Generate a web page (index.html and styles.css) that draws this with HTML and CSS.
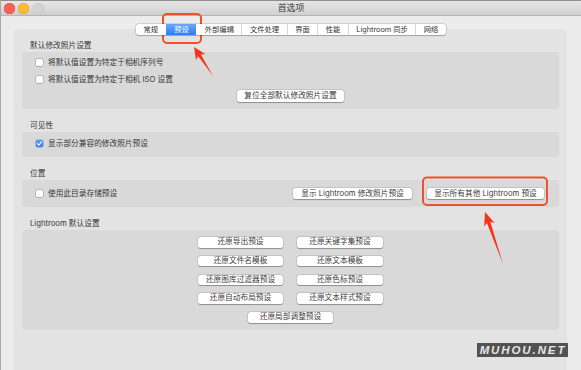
FILE: index.html
```html
<!DOCTYPE html>
<html lang="zh-CN">
<head>
<meta charset="utf-8">
<title>首选项</title>
<link rel="stylesheet" href="styles.css">
</head>
<body>
<div class="window">
  <div class="titlebar">
    <div class="lights">
      <span class="light light-red"></span>
      <span class="light light-yellow"></span>
      <span class="light light-gray"></span>
    </div>
    <div class="title">首选项</div>
    <div></div>
  </div>
  <div class="content">
    <div class="tabs">
      <div class="tab">常规</div>
      <div class="tab tab-active">预设</div>
      <div class="tab tab-after-active">外部编辑</div>
      <div class="tab">文件处理</div>
      <div class="tab">界面</div>
      <div class="tab">性能</div>
      <div class="tab">Lightroom 同步</div>
      <div class="tab">网络</div>
    </div>
    <div class="panel">
      <div class="group-label">默认修改照片设置</div>
      <div class="group group-defaults">
        <div class="check-row"><span class="checkbox"></span><span>将默认值设置为特定于相机序列号</span></div>
        <div class="check-row"><span class="checkbox"></span><span>将默认值设置为特定于相机 ISO 设置</span></div>
        <div class="btn btn-reset">复位全部默认修改照片设置</div>
      </div>

      <div class="group-label">可见性</div>
      <div class="group group-visibility">
        <div class="check-row"><span class="checkbox checkbox-on"><svg viewBox="0 0 8 8" width="7" height="7"><polyline points="1.6,4.2 3.3,5.8 6.4,2" fill="none" stroke="#fff" stroke-width="1.3" stroke-linecap="round" stroke-linejoin="round"/></svg></span><span>显示部分兼容的修改照片预设</span></div>
      </div>

      <div class="group-label">位置</div>
      <div class="group group-location">
        <div class="check-row check-row-grow"><span class="checkbox"></span><span>使用此目录存储预设</span></div>
        <div class="btn btn-show-lr">显示 Lightroom 修改照片预设</div>
        <div class="btn btn-show-all">显示所有其他 Lightroom 预设</div>
      </div>

      <div class="group-label">Lightroom 默认设置</div>
      <div class="group group-restore">
        <div class="btn btn-grid">还原导出预设</div>
        <div class="btn btn-grid">还原关键字集预设</div>
        <div class="btn btn-grid">还原文件名模板</div>
        <div class="btn btn-grid">还原文本模板</div>
        <div class="btn btn-grid">还原图库过滤器预设</div>
        <div class="btn btn-grid">还原色标预设</div>
        <div class="btn btn-grid">还原自动布局预设</div>
        <div class="btn btn-grid">还原文本样式预设</div>
        <div class="btn btn-grid btn-span">还原局部调整预设</div>
      </div>
    </div>
  </div>
</div>

<svg class="annotations" width="581" height="370" viewBox="0 0 581 370">
  <rect x="163" y="14" width="38" height="29" rx="4" ry="4" fill="none" stroke="#f0502a" stroke-width="2"/>
  <rect x="423" y="177.5" width="124" height="27.5" rx="4" ry="4" fill="none" stroke="#f0502a" stroke-width="2"/>
  <polygon points="213,76 200.8,54.5 205.2,54 194,47 196,60 198.2,56.3" fill="#f5321c"/>
  <polygon points="503,264 490.3,221.8 494.6,223 485,212 484.2,226.6 486.9,223" fill="#f5321c"/>
</svg>

<div class="watermark">MUHOU.NET</div>
</body>
</html>
```

FILE: styles.css
```css
* {
  box-sizing: border-box;
  margin: 0;
  padding: 0;
}

html, body {
  width: 581px;
  height: 370px;
  overflow: hidden;
}

body {
  position: relative;
  background: #ececec;
  font-family: Inter, "Noto Sans CJK SC", sans-serif;
  color: #363636;
}

.window {
  width: 581px;
  height: 370px;
  display: flex;
  flex-direction: column;
  background: #ececec;
  border-left: 1px solid #a9a9a9;
  border-top: 1px solid #8f8f8f;
}

.titlebar {
  height: 15px;
  flex: none;
  display: grid;
  grid-template-columns: 1fr auto 1fr;
  align-items: center;
  background: linear-gradient(#e6e6e6, #d0d0d0);
  border-bottom: 1px solid #b4b4b4;
}

.lights {
  display: flex;
  gap: 3.5px;
  padding-left: 2.5px;
}

.light {
  width: 11px;
  height: 11px;
  border-radius: 50%;
}

.light-red {
  background: #fc5f57;
  box-shadow: inset 0 0 0 0.5px #de4a42;
}

.light-yellow {
  background: #fdbc2f;
  box-shadow: inset 0 0 0 0.5px #dea034;
}

.light-gray {
  background: #d3d3d3;
  box-shadow: inset 0 0 0 0.5px #c0c0c0;
}

.title {
  font-size: 8.9px;
  line-height: 14px;
  color: #3c3c3c;
}

.content {
  flex: 1;
  display: flex;
  flex-direction: column;
  padding: 8px 14px 0 13px;
  min-height: 0;
}

.tabs {
  align-self: center;
  display: flex;
  height: 11px;
  background: #fff;
  border-radius: 2.5px;
  box-shadow: 0 0 0 0.5px rgba(0, 0, 0, 0.2), 0 0.5px 1px rgba(0, 0, 0, 0.2);
  position: relative;
  z-index: 1;
  margin-bottom: -6.5px;
  overflow: hidden;
  margin-left: 1px;
}

.tab {
  padding: 0 7.5px;
  font-size: 7.3px;
  line-height: 11px;
  color: #333;
  border-left: 1px solid #d6d6d6;
  white-space: nowrap;
}

.tab:first-child {
  border-left: none;
}

.tab-active {
  background: linear-gradient(#6aa8fa, #2e7cf6);
  color: #fff;
  border-left-color: transparent;
}

.tab-after-active {
  border-left-color: transparent;
}

.panel {
  flex: 1;
  background: #e3e3e3;
  border-radius: 4px 4px 0 0;
  padding: 12.5px 8px 0;
  font-size: 7.7px;
}

.group-label {
  line-height: 10px;
  padding-left: 8px;
  margin-bottom: 1px;
}

.group + .group-label {
  margin-top: 12px;
}

.group {
  background: #d9d9d9;
  border-radius: 3px;
}

.group-defaults {
  display: flex;
  flex-direction: column;
  gap: 5.5px;
  padding: 5px 14px 7px;
}

.group-visibility {
  padding: 6px 14px 8px;
}

.group-location {
  display: flex;
  align-items: center;
  gap: 15px;
  padding: 8px 15px 8px 14px;
}

.group-restore {
  display: grid;
  grid-template-columns: 85px 86px;
  grid-auto-rows: 10.6px;
  column-gap: 14px;
  row-gap: 8.2px;
  justify-content: center;
  padding: 7px 0 7.5px;
}

.check-row {
  display: flex;
  align-items: center;
  gap: 5px;
  height: 11px;
  line-height: 11px;
  white-space: nowrap;
}

.check-row-grow {
  flex: 1;
}

.checkbox {
  width: 7px;
  height: 7px;
  flex: none;
  background: #fff;
  border-radius: 1.5px;
  box-shadow: 0 0 0 0.5px rgba(0, 0, 0, 0.3), 0 0.5px 0.5px rgba(0, 0, 0, 0.15);
  display: flex;
  align-items: center;
  justify-content: center;
}

.checkbox-on {
  background: linear-gradient(#5a9df9, #2f7cf5);
  box-shadow: 0 0 0 0.5px rgba(20, 80, 200, 0.5);
}

.checkbox-on svg {
  display: block;
}

.btn {
  background: #fff;
  border-radius: 2.5px;
  box-shadow: 0 0 0 0.5px rgba(0, 0, 0, 0.16), 0 0.6px 0.8px rgba(0, 0, 0, 0.28);
  text-align: center;
  color: #3a3a3a;
  white-space: nowrap;
  font-size: 7.7px;
}

.btn-reset {
  align-self: center;
  width: 107px;
  height: 12px;
  line-height: 12px;
}

.btn-show-lr {
  width: 119px;
  height: 11px;
  line-height: 11px;
  flex: none;
}

.btn-show-all {
  width: 117px;
  height: 11px;
  line-height: 11px;
  flex: none;
}

.btn-grid {
  line-height: 10.6px;
}

.btn-span {
  grid-column: 1 / span 2;
  justify-self: center;
  width: 85px;
}

.annotations {
  position: absolute;
  left: 0;
  top: 0;
  pointer-events: none;
}

.watermark {
  position: absolute;
  left: 477px;
  top: 343px;
  width: 91px;
  height: 14px;
  background: rgba(62, 62, 62, 0.88);
  color: #e6e6e6;
  font: italic 700 11.5px/14px "Liberation Sans", sans-serif;
  letter-spacing: 1.9px;
  text-align: center;
  text-indent: 1px;
}
```
